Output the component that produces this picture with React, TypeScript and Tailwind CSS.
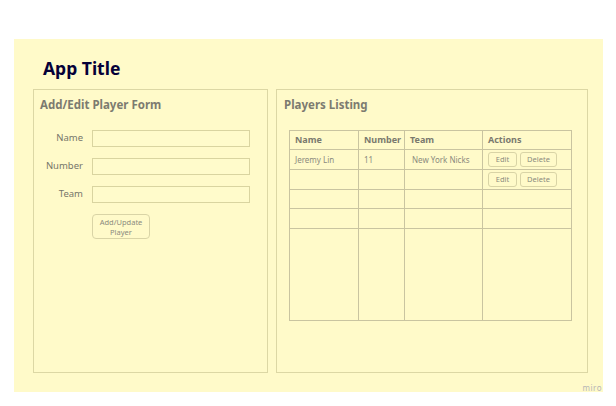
import React from "react";

const font = { fontFamily: '"Noto Sans", "Open Sans", sans-serif' };

function Field({ label }: { label: string }) {
  return (
    <div className="flex items-center h-[16px]">
      <div className="w-[43px] text-right text-[9.5px] text-[#76756a] leading-none">{label}</div>
      <div className="ml-[9px] w-[158px] h-[17px] border border-[#d9d4a0] bg-[#fffbcb]" />
    </div>
  );
}

function Btn({ children, w }: { children: React.ReactNode; w: string }) {
  return (
    <div className={`${w} h-[15px] border border-[#d9d4a6] rounded-[3px] flex items-center justify-center text-[7.5px] text-[#8b8a7e] leading-none`}>
      {children}
    </div>
  );
}

export default function App() {
  const cell = "border-r border-b border-[#c9c4a0]";
  const rows = [
    { name: "Jeremy Lin", num: "11", team: "New York Nicks", actions: true, h: "h-[20px]" },
    { name: "", num: "", team: "", actions: true, h: "h-[20px]" },
    { name: "", num: "", team: "", actions: false, h: "h-[19px]" },
    { name: "", num: "", team: "", actions: false, h: "h-[20px]" },
    { name: "", num: "", team: "", actions: false, h: "h-[92px]" },
  ];
  return (
    <div className="w-[616px] h-[406px] bg-white pt-[39px] pl-[14px]" style={font}>
      <div className="relative w-[589px] h-[353px] bg-[#fffac9] pl-[19px] pr-[15px]">
        <div className="h-[50px] pl-[10px] pt-[21px] text-[17.5px] font-bold text-[#050038] leading-none">App Title</div>
        <div className="flex gap-[8px]">
          <div className="w-[235px] h-[284px] border border-[#dcd7a4] pl-[6px] pt-[7px]">
            <div className="text-[11.5px] font-bold text-[#7c7b70] leading-[16px]">Add/Edit Player Form</div>
            <div className="mt-[17px] flex flex-col gap-[12px]">
              <Field label="Name" />
              <Field label="Number" />
              <Field label="Team" />
            </div>
            <div className="ml-[52px] mt-[12px] w-[58px] h-[25px] border border-[#d9d4a6] rounded-[4px] flex flex-col items-center justify-center text-[7.5px] text-[#8b8a7e] leading-[10px]">
              <span>Add/Update</span>
              <span>Player</span>
            </div>
          </div>
          <div className="w-[312px] h-[284px] border border-[#dcd7a4] pl-[7px] pt-[7px]">
            <div className="text-[11.5px] font-bold text-[#7c7b70] leading-[16px]">Players Listing</div>
            <div className="mt-[17px] ml-[5px] w-[283px] border-l border-t border-[#c9c4a0] grid grid-cols-[69px_46px_78px_89px]">
              {["Name", "Number", "Team", "Actions"].map((h) => (
                <div key={h} className={`${cell} h-[19px] flex items-center pl-[5px] text-[9px] font-bold text-[#7a796e]`}>
                  {h}
                </div>
              ))}
              {rows.map((r, i) => (
                <React.Fragment key={i}>
                  <div className={`${cell} ${r.h} flex items-center pl-[5px] text-[8px] text-[#8b8a7e]`}>{r.name}</div>
                  <div className={`${cell} ${r.h} flex items-center pl-[5px] text-[8px] text-[#8b8a7e]`}>{r.num}</div>
                  <div className={`${cell} ${r.h} flex items-center pl-[7px] text-[8px] text-[#8b8a7e]`}>{r.team}</div>
                  <div className={`${cell} ${r.h} flex items-center gap-[3px] pl-[5px]`}>
                    {r.actions && (
                      <>
                        <Btn w="w-[29px]">Edit</Btn>
                        <Btn w="w-[37px]">Delete</Btn>
                      </>
                    )}
                  </div>
                </React.Fragment>
              ))}
            </div>
          </div>
        </div>
        <div className="absolute right-[1px] bottom-[-2px] text-[8px] text-[#b5b5b5] tracking-[0.5px]">miro</div>
      </div>
    </div>
  );
}
